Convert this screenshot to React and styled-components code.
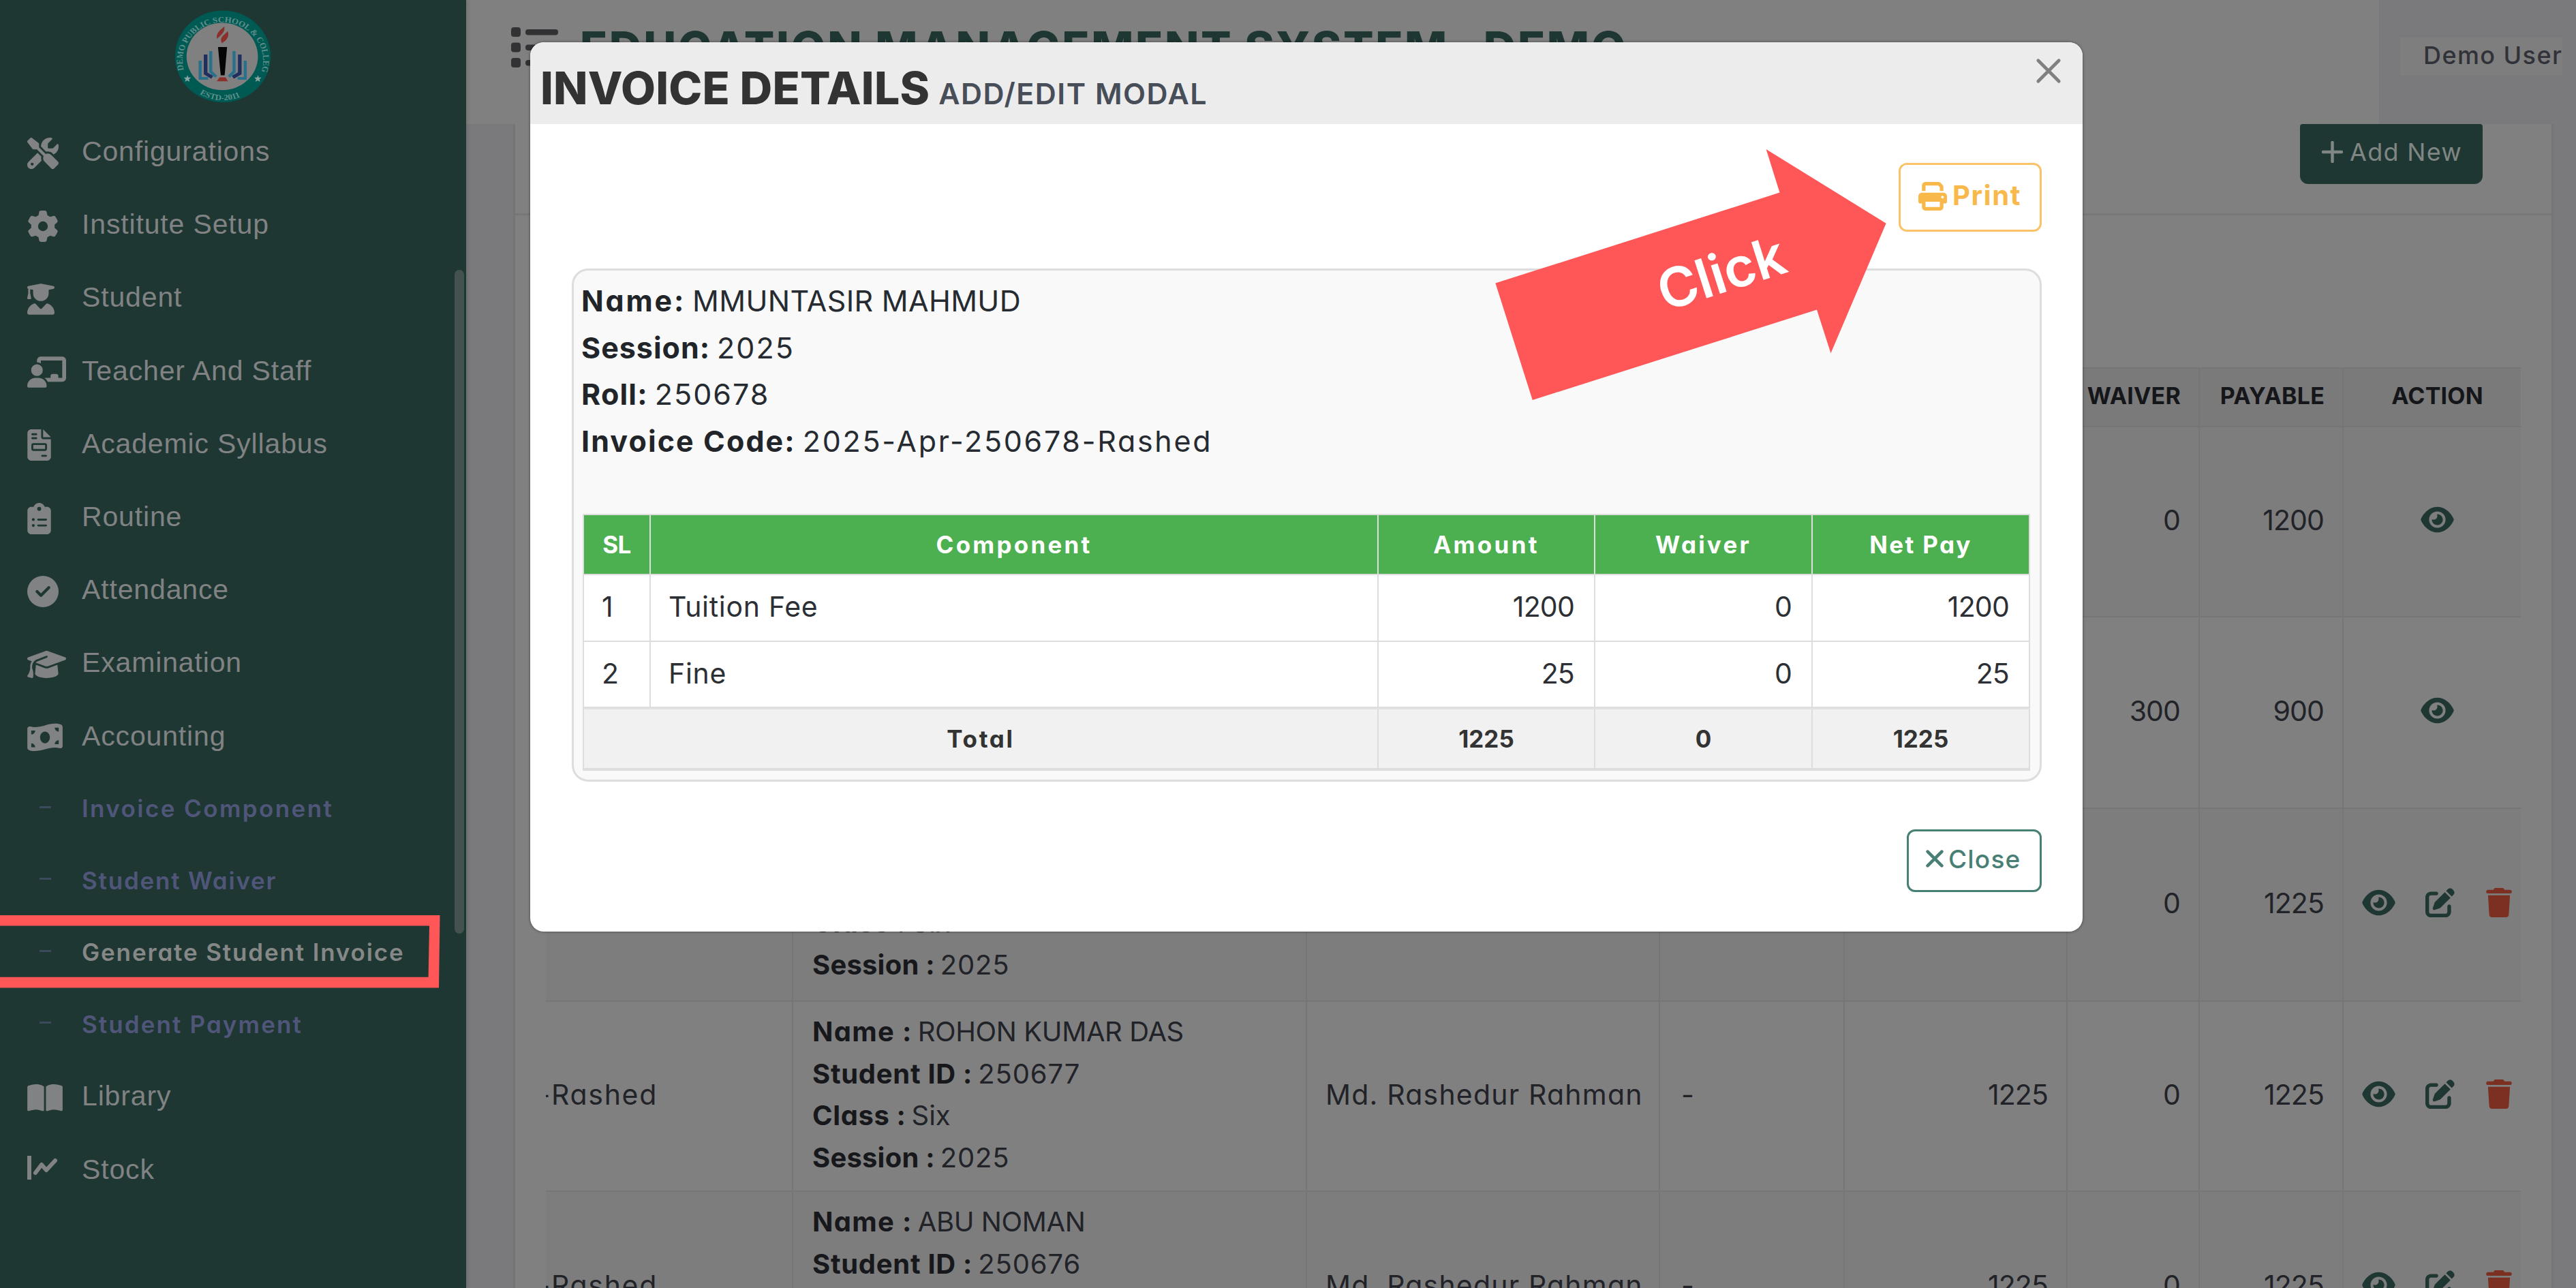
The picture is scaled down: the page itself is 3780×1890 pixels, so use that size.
import React from "react";
import styled, { createGlobalStyle } from "styled-components";
import {
  FaScrewdriverWrench,
  FaGear,
  FaUserGraduate,
  FaChalkboardUser,
  FaFileInvoice,
  FaClipboardList,
  FaCircleCheck,
  FaGraduationCap,
  FaMoneyBillWave,
  FaBookOpen,
  FaEye,
  FaPenToSquare,
  FaTrash,
  FaPrint,
} from "react-icons/fa6";

const GlobalStyle = createGlobalStyle`
  * { box-sizing: border-box; }
  body {
    margin: 0;
    background: #7a7a7c;
    font-family: Inter, "Open Sans", sans-serif;
    font-feature-settings: "cv11" 1;
  }
`;

const Page = styled.div`
  position: relative;
  display: flex;
  width: 3780px;
  height: 1890px;
  overflow: hidden;
`;

/* ---------- sidebar ---------- */

const Sidebar = styled.aside`
  position: relative;
  flex: 0 0 684px;
  height: 1890px;
  background: #1e3732;
  box-shadow: 2px 0 5px rgba(0, 0, 0, 0.12);
  z-index: 1;
`;

const Brand = styled.div`
  display: flex;
  justify-content: center;
  height: 169px;
  padding: 15px 30px 0 0;
`;

const MenuItem = styled.a`
  display: flex;
  align-items: center;
  height: 107.2px;
  padding-left: 40px;
  color: #808283;
  font-family: "Liberation Sans", sans-serif;
  font-size: 41px;
  letter-spacing: 0.85px;
  white-space: nowrap;
`;

const MenuIcon = styled.span`
  display: flex;
  flex: 0 0 80px;
  padding-top: 4px;
  svg {
    width: ${(p) => p.$width}px;
    height: 46px;
    flex: none;
  }
`;

const SubItem = styled(MenuItem)`
  height: 105.4px;
  padding-left: 58px;
  color: ${(p) => (p.$active ? "#868787" : "#50567a")};
  font-family: Inter, sans-serif;
  font-size: 35px;
  font-weight: 600;
  letter-spacing: ${(p) => p.$tracking}px;
`;

const Dash = styled.span`
  width: 17px;
  height: 3px;
  margin: -4px 45px 0 0;
  background: #3b4a5c;
`;

const ScrollThumb = styled.div`
  position: absolute;
  top: 396px;
  right: 3px;
  width: 14px;
  height: 974px;
  border-radius: 7px;
  background: #43524f;
`;

/* ---------- main area ---------- */

const Main = styled.main`
  flex: 1;
  display: flex;
  flex-direction: column;
  min-width: 0;
`;

const TopBar = styled.header`
  display: flex;
  flex: 0 0 182px;
`;

const TitleArea = styled.div`
  display: flex;
  align-items: flex-start;
  flex: 0 0 2807px;
  padding: 40px 0 0 66px;
  background: #808080;
`;

const SystemTitle = styled.h1`
  margin: -10px 0 0 31px;
  color: #1e3732;
  font-size: 66px;
  font-weight: 800;
  line-height: 80px;
  letter-spacing: 2.6px;
  white-space: nowrap;
`;

const UserArea = styled.div`
  display: flex;
  flex: 1;
  padding: 55px 0 0 31px;
  background: #7a7a7c;
`;

const UserName = styled.div`
  width: 238px;
  height: 56px;
  padding-left: 34px;
  background: #7e7e7f;
  color: #313237;
  font-size: 36px;
  font-weight: 500;
  line-height: 53px;
  letter-spacing: 1.42px;
  white-space: nowrap;
`;

const Card = styled.section`
  flex: 1;
  min-height: 0;
  overflow: hidden;
  margin: 0 33px 0 69px;
  border: solid #757575;
  border-width: 0 3px;
  background: #808080;
`;

const CardHeader = styled.div`
  display: flex;
  justify-content: flex-end;
  height: 134px;
  padding-right: 101px;
  border-bottom: 3px solid #777777;
`;

const AddButton = styled.div`
  display: flex;
  align-items: center;
  gap: 10px;
  width: 268px;
  height: 88px;
  padding: 0 0 7px 32px;
  border-radius: 4px 4px 12px 12px;
  background: #1e3732;
  color: #808684;
  font-size: 36px;
  letter-spacing: 1.3px;
  white-space: nowrap;
`;

const InvoiceList = styled.div`
  margin: 223px 45px 0 45px;
  border-top: 2px solid #767676;
`;

const listColumns = "363px 754px 518px 271px 327px 194px 211px 260px";

const ListHead = styled.div`
  display: grid;
  grid-template-columns: ${listColumns};
  height: 86px;
  background: #7a7a7a;
`;

const HeadCell = styled.div`
  display: flex;
  align-items: center;
  justify-content: ${(p) => (p.$center ? "center" : "flex-end")};
  padding: ${(p) => (p.$center ? "0 0 5px 15px" : "0 26px 5px 0")};
  border: solid #747676;
  border-width: 0 ${(p) => (p.$center ? 0 : 2)}px 2px 0;
  color: #151619;
  font-size: 34px;
  font-weight: 700;
  letter-spacing: 0.2px;
`;

const ListRow = styled.div`
  display: grid;
  grid-template-columns: ${listColumns};
  height: ${(p) => p.$height}px;
  background: ${(p) => (p.$striped ? "#7d7d7d" : "#808080")};
`;

const Cell = styled.div`
  display: flex;
  align-items: center;
  justify-content: ${(p) => p.$align || "flex-start"};
  min-width: 0;
  overflow: hidden;
  padding: 0 ${(p) => p.$right || 0}px 6px ${(p) => p.$left || 0}px;
  border: solid #757777;
  border-width: 0 ${(p) => (p.$last ? 0 : 2)}px 2px 0;
  color: #212328;
  font-size: 41px;
  letter-spacing: ${(p) => p.$tracking || 0}px;
  white-space: nowrap;
`;

const NumberCell = styled(Cell)`
  justify-content: flex-end;
  padding-right: 27px;
  letter-spacing: -0.9px;
`;

const StudentCell = styled(Cell)`
  display: block;
  padding: 13px 0 0 28px;
  font-size: 40px;
`;

const StudentLine = styled.div`
  height: 61.7px;
  line-height: 61.7px;
  letter-spacing: ${(p) => p.$tracking || 0}px;
`;

const StudentLabel = styled.b`
  margin-right: 8px;
  color: #17181b;
  font-weight: 700;
  letter-spacing: ${(p) => p.$tracking || 0}px;
`;

const ActionIcons = styled.div`
  display: flex;
  align-items: center;
  justify-content: ${(p) => (p.$single ? "center" : "flex-start")};
  width: 260px;
  padding-left: ${(p) => (p.$single ? 15 : 27)}px;
  color: #1e3732;
`;

const ActionIcon = styled.span`
  display: flex;
  margin-right: ${(p) => p.$gap || 0}px;
  color: ${(p) => (p.$danger ? "#7b3022" : "inherit")};
  svg {
    width: ${(p) => p.$width}px;
    height: 43px;
  }
`;

/* ---------- modal ---------- */

const Modal = styled.div`
  position: absolute;
  top: 62px;
  left: 778px;
  width: 2278px;
  height: 1305px;
  overflow: hidden;
  border-radius: 20px;
  background: #ffffff;
  box-shadow: 0 0 4px rgba(0, 0, 0, 0.45);
  z-index: 2;
`;

const ModalHeader = styled.div`
  display: flex;
  align-items: flex-start;
  justify-content: space-between;
  height: 120px;
  padding: 23px 31px 0 15px;
  background: #ececec;
`;

const ModalTitle = styled.h2`
  margin: 0;
  padding-top: 4px;
  color: #333333;
  font-size: 66px;
  font-weight: 800;
  line-height: 80px;
  letter-spacing: 0.2px;
  white-space: nowrap;
`;

const ModalSubtitle = styled.span`
  margin-left: 13px;
  color: #474e58;
  font-size: 43px;
  font-weight: 600;
  letter-spacing: 1.5px;
`;

const ModalBody = styled.div`
  display: flex;
  flex-direction: column;
  align-items: flex-end;
  padding: 57px 60px 0 61px;
`;

const OutlineButton = styled.div`
  display: flex;
  align-items: center;
  gap: ${(p) => p.$gap}px;
  width: ${(p) => p.$width}px;
  height: ${(p) => p.$height}px;
  padding-left: ${(p) => p.$left}px;
  padding-bottom: 6px;
  border: 3.5px solid ${(p) => p.$edge};
  border-radius: 12px;
  color: ${(p) => p.$color};
  font-size: ${(p) => p.$size}px;
  font-weight: ${(p) => p.$weight};
  letter-spacing: ${(p) => p.$tracking}px;
  white-space: nowrap;
`;

const PrintIcon = styled(FaPrint)`
  width: 42px;
  height: 44px;
  margin-top: 3px;
`;

const Panel = styled.div`
  width: 2157px;
  height: 753px;
  margin: 54px 0 70px;
  padding: 10px 14px 0 13px;
  border: 3px solid #dddddd;
  border-radius: 24px;
  background: #f9f9f9;
`;

const InfoLine = styled.div`
  height: 68.6px;
  margin-left: -2px;
  line-height: 68.6px;
  color: #262b31;
  font-size: 43px;
  letter-spacing: ${(p) => p.$tracking}px;
  white-space: nowrap;
`;

const InfoLabel = styled.b`
  margin-right: 10px;
  color: #212529;
  font-weight: 700;
  letter-spacing: ${(p) => p.$tracking}px;
`;

const FeeTable = styled.div`
  display: grid;
  grid-template-columns: 98px 1068px 318px 319px 319px;
  grid-template-rows: 88px 98px 97px 92px;
  margin-top: 73px;
  border: solid #dddddd;
  border-width: 2px 0 0 2px;
`;

const FeeCell = styled.div`
  display: flex;
  align-items: center;
  justify-content: ${(p) => (p.$right ? "flex-end" : "flex-start")};
  padding: 0 ${(p) => (p.$right ? 29 : 0)}px 4px ${(p) => (p.$right ? 0 : 26)}px;
  border: solid #dddddd;
  border-width: 0 2px 2px 0;
  background: #ffffff;
  color: #2c3035;
  font-size: 41px;
  letter-spacing: ${(p) => (p.$right ? -0.8 : 0.7)}px;
`;

const FeeHead = styled(FeeCell)`
  justify-content: center;
  padding: 0 0 1px;
  background: #4caf50;
  color: #ffffff;
  font-size: 35px;
  font-weight: 700;
  letter-spacing: ${(p) => p.$tracking}px;
`;

const FeeTotal = styled(FeeCell)`
  grid-column: span ${(p) => p.$span || 1};
  justify-content: center;
  padding: 0;
  border-top: 2px solid #e2e2e2;
  border-bottom-width: 4px;
  background: #f1f1f1;
  color: #333333;
  font-size: 35px;
  font-weight: 700;
  letter-spacing: ${(p) => p.$tracking || 0}px;
`;

/* ---------- annotations ---------- */

const Annotations = styled.svg`
  position: absolute;
  inset: 0;
  width: 3780px;
  height: 1890px;
  pointer-events: none;
  z-index: 3;
`;

const Logo = () => (
  <svg width="142" height="136" viewBox="573 35 320 333" preserveAspectRatio="none">
    <defs>
      <path id="ringTop" d="M604 250 A133 138 0 1 1 862 250" />
      <path id="ringBottom" d="M640 324 A146 152 0 0 0 826 324" />
    </defs>
    <ellipse cx="733" cy="201" rx="158" ry="165" fill="#005a54" />
    <ellipse cx="731" cy="201" rx="118" ry="121" fill="#808080" />
    <text fill="#5f8f8b" fontFamily="Liberation Serif, serif" fontSize="29" fontWeight="700">
      <textPath href="#ringTop">DEMO PUBLIC SCHOOL &amp; COLLEGE</textPath>
    </text>
    <text fill="#5f8f8b" fontFamily="Liberation Serif, serif" fontSize="29" fontWeight="700">
      <textPath href="#ringBottom" startOffset="20">ESTD-2011</textPath>
    </text>
    <path d="M616 268l3 9h9l-7 6 2 9-8-5-7 5 2-9-6-6h9zM849 268l3 9h9l-7 6 2 9-8-5-7 5 2-9-6-6h9z" fill="#8aa5a2" />
    <path d="M738 94C727 104 708 118 714 138C722 128 742 116 738 94ZM749 110C738 124 720 132 730 153C742 146 757 130 749 110Z" fill="#8b2f2a" />
    <path d="M717 167H747L739 269H726Z" fill="#050505" />
    <path d="M722 276H742L750 290H713Z" fill="#8b2f2a" />
    <g fill="none" strokeWidth="10">
      <path d="M658 216V280H684M807 216V280H782" stroke="#28708c" />
      <path d="M676 194V262L698 276M789 194V262L766 276" stroke="#1f2f5f" strokeWidth="12" />
      <path d="M693 182V256L711 274M770 182V256L753 274" stroke="#28708c" />
    </g>
  </svg>
);

const StockIcon = () => (
  <svg viewBox="0 0 44 46" fill="none" stroke="currentColor" strokeLinecap="round" strokeLinejoin="round">
    <path d="M3 1V36" strokeWidth="6" strokeLinecap="butt" />
    <path d="M12 26L21 14L28 22L41 8" strokeWidth="6" />
  </svg>
);

const ListIcon = () => (
  <svg width="70" height="62" viewBox="0 0 70 62" fill="#323235">
    {[0, 22.5, 45].map((y) => (
      <g key={y}>
        <rect x="0" y={y} width="14" height="14" rx="4" />
        <rect x="21" y={y + 3} width="48" height="8.5" rx="4" />
      </g>
    ))}
  </svg>
);

const CrossIcon = ({ size, weight }) => (
  <svg width={size} height={size} viewBox="0 0 40 40" fill="none" stroke="currentColor" strokeWidth={weight} strokeLinecap="round">
    <path d="M4 4L36 36M36 4L4 36" />
  </svg>
);

const PlusIcon = () => (
  <svg width="31" height="32" viewBox="0 0 31 32" fill="none" stroke="currentColor" strokeWidth="4.5" strokeLinecap="round">
    <path d="M15.5 2V30M2 16H29" />
  </svg>
);

const CloseGlyph = styled.span`
  display: flex;
  color: #808080;
`;

const menuTop = [
  ["Configurations", FaScrewdriverWrench, 46],
  ["Institute Setup", FaGear, 46],
  ["Student", FaUserGraduate, 40],
  ["Teacher And Staff", FaChalkboardUser, 57],
  ["Academic Syllabus", FaFileInvoice, 35],
  ["Routine", FaClipboardList, 35],
  ["Attendance", FaCircleCheck, 46],
  ["Examination", FaGraduationCap, 57],
  ["Accounting", FaMoneyBillWave, 52],
];
const subMenu = [
  ["Invoice Component", 2.4],
  ["Student Waiver", 1.8],
  ["Generate Student Invoice", 1.85],
  ["Student Payment", 2.1],
];
const menuBottom = [
  ["Library", FaBookOpen, 52],
  ["Stock", StockIcon, 44],
];

const invoices = [
  { height: 279, waiver: "0", payable: "1200" },
  { height: 281, waiver: "300", payable: "900" },
  { height: 283, cls: "Six", session: "2025", waiver: "0", payable: "1225", editable: true },
  {
    height: 279,
    code: "-Rashed",
    name: "ROHON KUMAR DAS",
    id: "250677",
    cls: "Six",
    session: "2025",
    createdBy: "Md. Rashedur Rahman",
    note: "-",
    amount: "1225",
    waiver: "0",
    payable: "1225",
    editable: true,
  },
  {
    height: 281,
    code: "-Rashed",
    name: "ABU NOMAN",
    id: "250676",
    createdBy: "Md. Rashedur Rahman",
    note: "-",
    amount: "1225",
    waiver: "0",
    payable: "1225",
    editable: true,
  },
];

const fees = [
  ["1", "Tuition Fee", "1200", "0", "1200"],
  ["2", "Fine", "25", "0", "25"],
];

const MenuEntry = ({ label, icon: Icon, width }) => (
  <MenuItem>
    <MenuIcon $width={width}>
      <Icon />
    </MenuIcon>
    <span>{label}</span>
  </MenuItem>
);

const StudentField = ({ label, value, tracking, labelTracking }) => (
  <StudentLine $tracking={tracking}>
    {value && (
      <>
        <StudentLabel $tracking={labelTracking}>{label} :</StudentLabel>
        {value}
      </>
    )}
  </StudentLine>
);

const InvoiceRow = ({ row, striped }) => (
  <ListRow $height={row.height} $striped={striped}>
    <Cell $align="flex-end" $right={197} $tracking={1.7}>{row.code}</Cell>
    <StudentCell>
      <StudentField label="Name" value={row.name} tracking={-0.4} labelTracking={1.3} />
      <StudentField label="Student ID" value={row.id} tracking={0.9} labelTracking={0.7} />
      <StudentField label="Class" value={row.cls} labelTracking={0.6} />
      <StudentField label="Session" value={row.session} tracking={0.8} labelTracking={0.2} />
    </StudentCell>
    <Cell $left={27} $tracking={1.2}>{row.createdBy}</Cell>
    <Cell $left={31}>{row.note}</Cell>
    <NumberCell>{row.amount}</NumberCell>
    <NumberCell>{row.waiver}</NumberCell>
    <NumberCell>{row.payable}</NumberCell>
    <Cell $last>
      <ActionIcons $single={!row.editable}>
        <ActionIcon $width={49} $gap={row.editable ? 44 : 0}><FaEye /></ActionIcon>
        {row.editable && (
          <>
            <ActionIcon $width={43} $gap={46}><FaPenToSquare /></ActionIcon>
            <ActionIcon $width={38} $danger><FaTrash /></ActionIcon>
          </>
        )}
      </ActionIcons>
    </Cell>
  </ListRow>
);

export default function App() {
  return (
    <Page>
      <GlobalStyle />
      <Sidebar>
        <Brand>
          <Logo />
        </Brand>
        {menuTop.map(([label, icon, width]) => (
          <MenuEntry key={label} label={label} icon={icon} width={width} />
        ))}
        {subMenu.map(([label, tracking]) => (
          <SubItem key={label} $tracking={tracking} $active={label === "Generate Student Invoice"}>
            <Dash />
            <span>{label}</span>
          </SubItem>
        ))}
        {menuBottom.map(([label, icon, width]) => (
          <MenuEntry key={label} label={label} icon={icon} width={width} />
        ))}
        <ScrollThumb />
      </Sidebar>

      <Main>
        <TopBar>
          <TitleArea>
            <ListIcon />
            <SystemTitle>EDUCATION MANAGEMENT SYSTEM- DEMO</SystemTitle>
          </TitleArea>
          <UserArea>
            <UserName>Demo User</UserName>
          </UserArea>
        </TopBar>
        <Card>
          <CardHeader>
            <AddButton>
              <PlusIcon />
              Add New
            </AddButton>
          </CardHeader>
          <InvoiceList>
            <ListHead>
              <HeadCell />
              <HeadCell />
              <HeadCell />
              <HeadCell />
              <HeadCell />
              <HeadCell>WAIVER</HeadCell>
              <HeadCell>PAYABLE</HeadCell>
              <HeadCell $center>ACTION</HeadCell>
            </ListHead>
            {invoices.map((row, i) => (
              <InvoiceRow key={i} row={row} striped={i % 2 === 0} />
            ))}
          </InvoiceList>
        </Card>
      </Main>

      <Modal>
        <ModalHeader>
          <ModalTitle>
            INVOICE DETAILS
            <ModalSubtitle>ADD/EDIT MODAL</ModalSubtitle>
          </ModalTitle>
          <CloseGlyph>
            <CrossIcon size={38} weight={5} />
          </CloseGlyph>
        </ModalHeader>
        <ModalBody>
          <OutlineButton $width={210} $height={101} $left={26} $gap={8} $size={40} $weight={700} $tracking={1.6} $color="#f9b84a" $edge="#fac36a">
            <PrintIcon />
            Print
          </OutlineButton>
          <Panel>
            <InfoLine $tracking={0.3}>
              <InfoLabel $tracking={2.8}>Name:</InfoLabel>MMUNTASIR MAHMUD
            </InfoLine>
            <InfoLine $tracking={2}>
              <InfoLabel $tracking={1}>Session:</InfoLabel>2025
            </InfoLine>
            <InfoLine $tracking={2}>
              <InfoLabel $tracking={1.2}>Roll:</InfoLabel>250678
            </InfoLine>
            <InfoLine $tracking={2.7}>
              <InfoLabel $tracking={2.1}>Invoice Code:</InfoLabel>2025-Apr-250678-Rashed
            </InfoLine>
            <FeeTable>
              <FeeHead $tracking={-0.5}>SL</FeeHead>
              <FeeHead $tracking={3.2}>Component</FeeHead>
              <FeeHead $tracking={3.3}>Amount</FeeHead>
              <FeeHead $tracking={3.2}>Waiver</FeeHead>
              <FeeHead $tracking={2.3}>Net Pay</FeeHead>
              {fees.map((fee) =>
                fee.map((value, i) => (
                  <FeeCell key={fee[0] + i} $right={i > 1}>
                    {value}
                  </FeeCell>
                ))
              )}
              <FeeTotal $span={2} $tracking={2.7}>Total</FeeTotal>
              <FeeTotal>1225</FeeTotal>
              <FeeTotal>0</FeeTotal>
              <FeeTotal>1225</FeeTotal>
            </FeeTable>
          </Panel>
          <OutlineButton $width={198} $height={92} $left={25} $gap={7} $size={37} $weight={500} $tracking={1.2} $color="#487f74" $edge="#487f74">
            <CrossIcon size={26} weight={7} />
            Close
          </OutlineButton>
        </ModalBody>
      </Modal>

      <Annotations viewBox="0 0 3780 1890">
        <path d="M0 1343H645.5L644 1449.5H0V1433.7H628.6L630 1358.5H0Z" fill="#ff5757" />
        <path d="M2591.6 219L2767.6 327.7L2686.5 518.3L2666 454.5L2248.8 587L2194.4 415.6L2611.5 282.6Z" fill="#ff5757" />
        <text
          transform="translate(2443 457) rotate(-17.7)"
          textLength="192"
          fill="#ffffff"
          fontFamily="Inter, sans-serif"
          fontSize="80"
          fontWeight="600"
        >
          Click
        </text>
      </Annotations>
    </Page>
  );
}
